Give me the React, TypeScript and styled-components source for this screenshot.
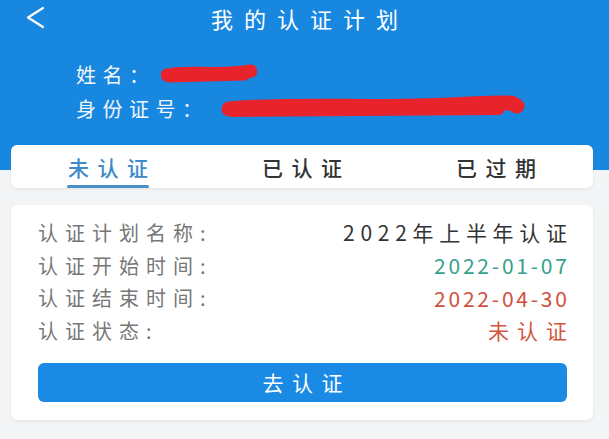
import { FC } from "react"
import styled, { createGlobalStyle } from "styled-components"

const Global = createGlobalStyle`
  html, body {
    margin: 0;
    padding: 0;
    background: #f3f4f6;
    font-family: "Noto Sans CJK SC", "Noto Sans", sans-serif;
  }
`

const Page = styled.div`
  width: 609px;
  min-height: 439px;
  background: #f3f4f6;
`

const Header = styled.header`
  background: #1887e0;
  height: 170px;
  color: #fff;
`

const TopBar = styled.div`
  height: 36px;
  display: grid;
  grid-template-columns: 1fr auto 1fr;
  align-items: center;
`

const Back = styled.div`
  padding-left: 24px;
  display: flex;
  align-items: center;
  svg {
    display: block;
  }
`

const Title = styled.div`
  font-size: 22px;
  letter-spacing: 11px;
  margin-right: -11px;
  line-height: 36px;
`

const Info = styled.div`
  padding: 21px 0 0 76px;
`

const InfoRow = styled.div`
  height: 34px;
  display: flex;
  align-items: center;
  font-size: 20px;
  letter-spacing: 6.5px;
  color: #f2f6fb;
`

const Scribble = styled.svg<{ $gap: number }>`
  display: block;
  margin-left: ${p => p.$gap}px;
`

const TabCard = styled.nav`
  margin: -25px 16px 0 11px;
  height: 43px;
  background: #fff;
  border-radius: 6px;
  box-shadow: 0 1px 3px rgba(0, 0, 0, 0.08);
  display: flex;
  position: relative;
`

const Tab = styled.div<{ $active?: boolean }>`
  flex: 1;
  display: flex;
  justify-content: center;
  align-items: center;
  position: relative;
  font-size: 21px;
  font-weight: 500;
  color: ${p => (p.$active ? "#3c8ac8" : "#333")};
  span {
    letter-spacing: 8.5px;
    margin-right: -8.5px;
  }
  &::after {
    content: "";
    display: ${p => (p.$active ? "block" : "none")};
    position: absolute;
    bottom: 0;
    left: 50%;
    width: 82px;
    margin-left: -41px;
    height: 3px;
    border-radius: 2px;
    background: #4a8fc6;
  }
`

const Card = styled.section`
  margin: 17px 16px 0 11px;
  padding: 11px 26px 18px 27px;
  background: #fff;
  border-radius: 6px;
  box-shadow: 0 1px 3px rgba(0, 0, 0, 0.08);
`

const Row = styled.div`
  height: 32.7px;
  display: flex;
  align-items: center;
  justify-content: space-between;
`

const Label = styled.span`
  font-size: 20px;
  letter-spacing: 7px;
  color: #777;
`

const Value = styled.span<{ $color: string; $spacing: number }>`
  font-size: 21px;
  color: ${p => p.$color};
  letter-spacing: ${p => p.$spacing}px;
  margin-right: -${p => p.$spacing}px;
`

const Button = styled.button`
  margin-top: 16px;
  width: 100%;
  height: 39px;
  border: none;
  border-radius: 6px;
  background: #1a8ae5;
  color: #fff;
  font-family: inherit;
  font-size: 21px;
  span {
    letter-spacing: 8.5px;
    margin-right: -8.5px;
  }
`

const rows = [
  { label: "认证计划名称:", value: "2022年上半年认证", color: "#333", spacing: 5.7 },
  { label: "认证开始时间:", value: "2022-01-07", color: "#35a08b", spacing: 2.8 },
  { label: "认证结束时间:", value: "2022-04-30", color: "#d0503d", spacing: 2.8 },
  { label: "认证状态:", value: "未认证", color: "#d2553f", spacing: 8 },
]

const App: FC = () => {
  return (
    <Page>
      <Global />
      <Header>
        <TopBar>
          <Back>
            <svg width="22" height="24" viewBox="0 0 22 24">
              <polyline points="19,2 4,11.5 19,21" fill="none" stroke="#fff" strokeWidth="2.2" strokeLinecap="round" strokeLinejoin="round" />
            </svg>
          </Back>
          <Title>我的认证计划</Title>
          <div />
        </TopBar>
        <Info>
          <InfoRow>
            姓名：
            <Scribble $gap={5} width="96" height="24" viewBox="0 0 96 24">
              <path d="M6 13 C 26 8, 56 15, 90 9" fill="none" stroke="#e8232b" strokeWidth="13" strokeLinecap="round" />
              <path d="M8 16 L 84 14" fill="none" stroke="#e8232b" strokeWidth="9" strokeLinecap="round" />
            </Scribble>
          </InfoRow>
          <InfoRow>
            身份证号：
            <Scribble $gap={12} width="304" height="26" viewBox="0 0 304 26">
              <path d="M8 14 C 70 8, 150 14, 230 10 S 288 9, 296 11" fill="none" stroke="#e8232b" strokeWidth="15" strokeLinecap="round" />
              <path d="M12 17 L 278 15" fill="none" stroke="#e8232b" strokeWidth="10" strokeLinecap="round" />
            </Scribble>
          </InfoRow>
        </Info>
      </Header>
      <TabCard>
        <Tab $active><span>未认证</span></Tab>
        <Tab><span>已认证</span></Tab>
        <Tab><span>已过期</span></Tab>
      </TabCard>
      <Card>
        {rows.map(r => (
          <Row key={r.label}>
            <Label>{r.label}</Label>
            <Value $color={r.color} $spacing={r.spacing}>{r.value}</Value>
          </Row>
        ))}
        <Button><span>去认证</span></Button>
      </Card>
    </Page>
  )
}

export default App
